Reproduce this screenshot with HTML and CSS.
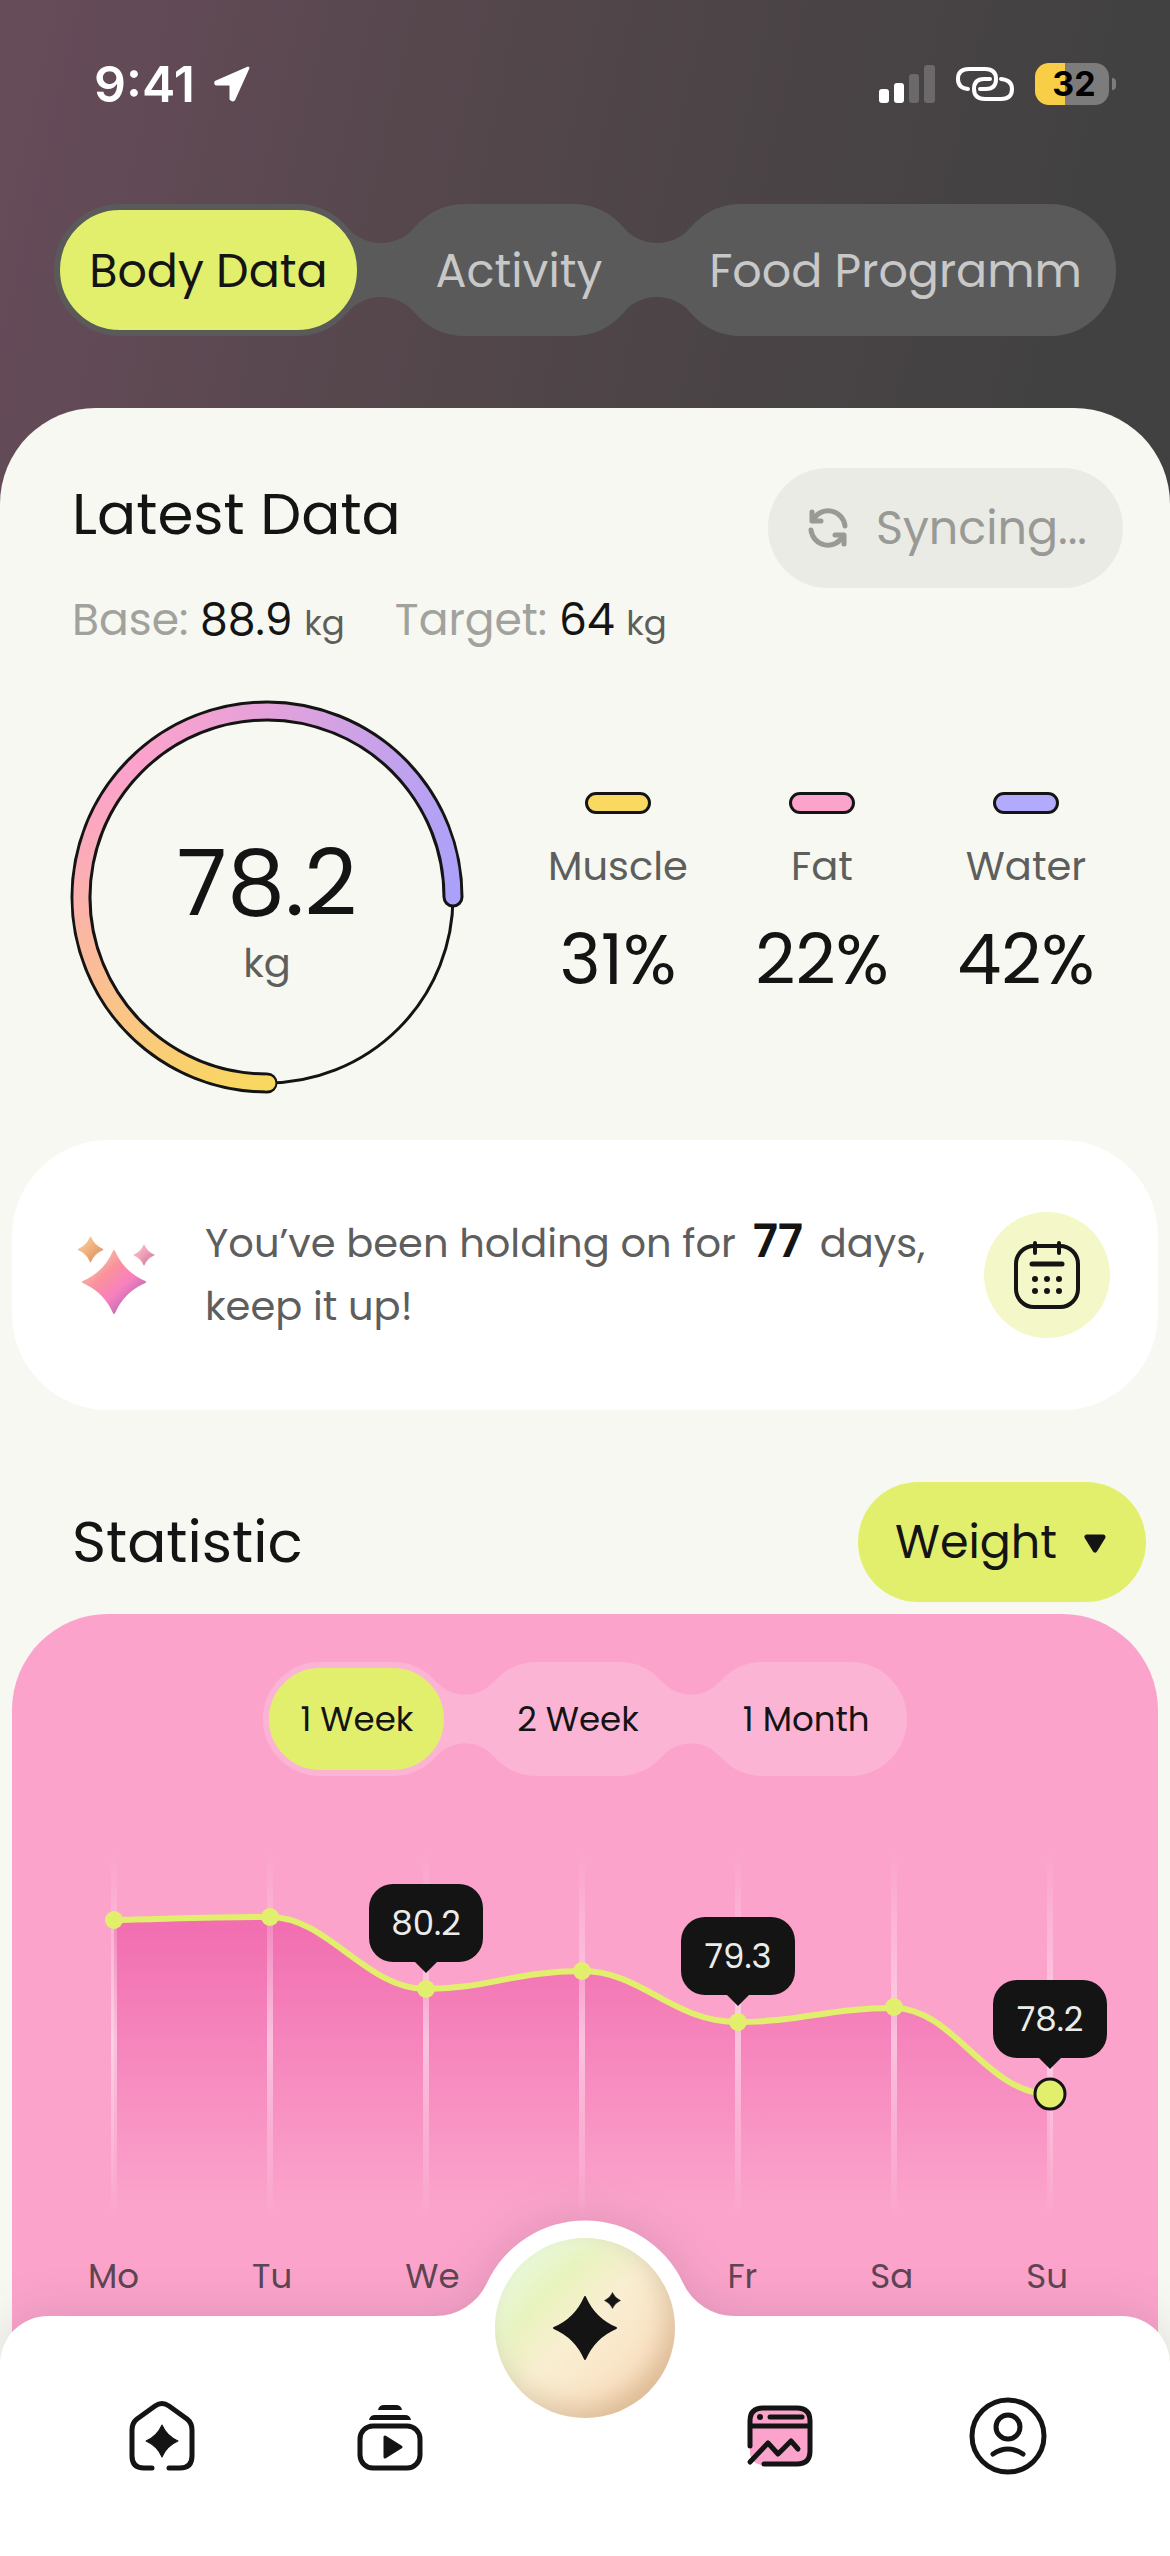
FILE: index.html
```html
<!DOCTYPE html>
<html lang="en">
<head>
  <meta charset="utf-8">
  <meta name="viewport" content="width=device-width, initial-scale=1">
  <title>Body Data</title>
  <link rel="stylesheet" href="styles.css">
</head>
<body>
  <svg class="defs" aria-hidden="true">
    <defs>
      <symbol id="star" viewBox="-32 -32 64 64">
        <path d="M0-30Q9-9 30 0Q9 9 0 30Q-9 9-30 0Q-9-9 0-30Z" stroke-width="2" stroke-linejoin="round"/>
      </symbol>
      <symbol id="neck-large" viewBox="-34 -66 68 132">
        <path d="M-34-43A44 44 0 0 0 34-43V43A44 44 0 0 0-34 43Z"/>
      </symbol>
      <symbol id="neck-small" viewBox="-28 -57 56 114">
        <path d="M-28-37A37 37 0 0 0 28-37V37A37 37 0 0 0-28 37Z"/>
      </symbol>
    </defs>
  </svg>

  <header class="top">
    <div class="status">
      <div class="status-group">
        <span class="status-time">9:41</span>
        <svg width="38" height="38" viewBox="0 0 38 38" aria-hidden="true"><path d="M35 3L3 17Q2 19 4 19H18V34Q20 36 21 34Z" fill="#fff" stroke="#fff" stroke-width="3" stroke-linejoin="round"/></svg>
      </div>
      <div class="status-group status-icons">
        <svg width="56" height="38" viewBox="0 0 56 38" aria-hidden="true">
          <g fill="#fff"><rect y="24" width="10" height="14" rx="3"/><rect x="15" y="18" width="10" height="20" rx="3"/></g>
          <g fill="#6b696a"><rect x="30" y="9" width="10" height="29" rx="3"/><rect x="45" width="11" height="38" rx="3"/></g>
        </svg>
        <svg width="60" height="38" viewBox="0 0 60 38" fill="none" stroke="#fff" stroke-width="4" stroke-linecap="round" aria-hidden="true">
          <path d="M13 24Q3 23 3 14Q3 4 14 4H30Q41 4 41 14Q41 24 31 24H25"/>
          <path d="M46 14Q57 15 57 24Q57 34 46 34H30Q19 34 19 24Q19 14 29 14H35"/>
        </svg>
        <div class="battery"><span class="battery-level">32</span></div>
      </div>
    </div>

    <nav class="segments segments-large" aria-label="Sections">
      <button class="segment is-active" style="--share:308">Body Data</button>
      <svg class="neck" aria-hidden="true"><use href="#neck-large"/></svg>
      <button class="segment" style="--share:237">Activity</button>
      <svg class="neck" aria-hidden="true"><use href="#neck-large"/></svg>
      <button class="segment" style="--share:445">Food Programm</button>
    </nav>
  </header>

  <main class="sheet">
    <section class="latest">
      <div>
        <h1 class="title">Latest Data</h1>
        <p class="facts">
          <span class="fact">Base: <b>88.9</b> <small>kg</small></span>
          <span class="fact">Target: <b>64</b> <small>kg</small></span>
        </p>
      </div>
      <button class="sync" disabled>
        <svg width="48" height="48" viewBox="0 0 48 48" fill="none" stroke="currentColor" stroke-width="5" stroke-linecap="round" stroke-linejoin="round" aria-hidden="true">
          <path d="M41 22A17 17 0 0 0 9 16"/><path d="M8 8V17H17"/>
          <path d="M7 26A17 17 0 0 0 39 32"/><path d="M40 40V31H31"/>
        </svg>
        Syncing...
      </button>
    </section>

    <section class="composition">
      <div class="ring">
        <svg viewBox="0 0 394 394" fill="none" aria-hidden="true">
          <defs>
            <linearGradient id="warm" gradientUnits="userSpaceOnUse" x1="197" y1="383" x2="60" y2="70"><stop stop-color="#f9d85f"/><stop offset="1" stop-color="#fca2cb"/></linearGradient>
            <linearGradient id="cool" gradientUnits="userSpaceOnUse" x1="65" y1="66" x2="383" y2="180"><stop stop-color="#fca2cb"/><stop offset="1" stop-color="#aca1fa"/></linearGradient>
          </defs>
          <circle cx="197" cy="197" r="186" stroke="#141414" stroke-width="3"/>
          <path d="M197 383A186 186 0 1 1 383 197" stroke="#141414" stroke-width="21" stroke-linecap="round"/>
          <path d="M383 197A186 186 0 0 0 65 66" stroke="url(#cool)" stroke-width="15" stroke-linecap="round"/>
          <path d="M197 383A186 186 0 0 1 65 66" stroke="url(#warm)" stroke-width="15"/>
          <path d="M197 383h1" stroke="#f9d85f" stroke-width="15" stroke-linecap="round"/>
        </svg>
        <p class="ring-value">78.2</p>
        <p class="ring-unit">kg</p>
      </div>
      <dl class="metrics">
        <div class="metric muscle"><dt>Muscle</dt><dd>31%</dd></div>
        <div class="metric fat"><dt>Fat</dt><dd>22%</dd></div>
        <div class="metric water"><dt>Water</dt><dd>42%</dd></div>
      </dl>
    </section>

    <section class="streak">
      <svg class="sparkles" width="78" height="78" viewBox="0 0 78 78" aria-hidden="true">
        <defs>
          <linearGradient id="pinkStar" x1="0.2" y1="0.2" x2="0.75" y2="0.8"><stop stop-color="#f7b5ac"/><stop offset=".3" stop-color="#fa919b"/><stop offset=".7" stop-color="#f880bf"/><stop offset="1" stop-color="#c870b5"/></linearGradient>
          <linearGradient id="goldStar" x1="0.2" y1="0.2" x2="0.8" y2="0.8"><stop stop-color="#f6c79a"/><stop offset=".5" stop-color="#f0ae79"/><stop offset="1" stop-color="#d99a6c"/></linearGradient>
          <linearGradient id="roseStar" x1="0.2" y1="0.2" x2="0.8" y2="0.8"><stop stop-color="#f5b8c6"/><stop offset=".5" stop-color="#ee9db5"/><stop offset="1" stop-color="#d382a4"/></linearGradient>
        </defs>
        <use href="#star" x="4" y="13" width="66" height="66" fill="url(#pinkStar)" stroke="url(#pinkStar)"/>
        <use href="#star" x="0" y="0" width="27" height="27" fill="url(#goldStar)" stroke="url(#goldStar)"/>
        <use href="#star" x="56" y="8" width="22" height="22" fill="url(#roseStar)" stroke="url(#roseStar)"/>
      </svg>
      <p class="streak-text">You’ve been holding on for <b>77</b> days,<br>keep it up!</p>
      <button class="calendar" aria-label="Calendar">
        <svg width="72" height="72" viewBox="0 0 72 72" fill="none" stroke="#141414" stroke-width="4" stroke-linecap="round" aria-hidden="true">
          <rect x="5" y="7" width="62" height="61" rx="18"/>
          <path d="M24 4v10M48 4v10"/><path d="M21 25h30" stroke-width="5"/>
          <g fill="#141414" stroke="none"><circle cx="24" cy="40" r="3"/><circle cx="36" cy="40" r="3"/><circle cx="48" cy="40" r="3"/><circle cx="24" cy="52" r="3"/><circle cx="36" cy="52" r="3"/><circle cx="48" cy="52" r="3"/></g>
        </svg>
      </button>
    </section>

    <section class="statistic">
      <div class="statistic-head">
        <h2 class="title">Statistic</h2>
        <div class="picker">
          <select class="picker-select" aria-label="Measure"><option>Weight</option></select>
          <svg class="picker-arrow" width="24" height="20" viewBox="0 0 24 20" aria-hidden="true"><path d="M4 3H20L12 16Z" fill="#141414" stroke="#141414" stroke-width="5" stroke-linejoin="round"/></svg>
        </div>
      </div>

      <div class="panel">
        <div class="segments segments-small">
          <button class="segment is-active">1 Week</button>
          <svg class="neck" aria-hidden="true"><use href="#neck-small"/></svg>
          <button class="segment">2 Week</button>
          <svg class="neck" aria-hidden="true"><use href="#neck-small"/></svg>
          <button class="segment">1 Month</button>
        </div>

        <div class="chart">
          <svg viewBox="0 0 1146 380" fill="none" role="img" aria-label="Weight by day">
            <defs>
              <linearGradient id="area" gradientUnits="userSpaceOnUse" x1="0" y1="70" x2="0" y2="356"><stop stop-color="#f16db0"/><stop offset="1" stop-color="#f16db0" stop-opacity="0"/></linearGradient>
              <linearGradient id="line" x1="0" y1="0" x2="0" y2="1"><stop stop-color="#fff" stop-opacity="0"/><stop offset=".52" stop-color="#fff" stop-opacity=".5"/><stop offset="1" stop-color="#fff" stop-opacity="0"/></linearGradient>
            </defs>
            <path d="M102 74C154 73 206 71 258 71C316 71 354 143 414 143C474 143 504 125 570 125C630 125 660 176 726 176C790 176 816 162 882 162C942 162 974 248 1038 248V374H102Z" fill="url(#area)"/>
            <g fill="url(#line)">
              <rect x="99" y="4" width="6" height="370"/><rect x="255" y="4" width="6" height="370"/><rect x="411" y="4" width="6" height="370"/><rect x="567" y="4" width="6" height="370"/><rect x="723" y="4" width="6" height="370"/><rect x="879" y="4" width="6" height="370"/><rect x="1035" y="4" width="6" height="370"/>
            </g>
            <path d="M102 74C154 73 206 71 258 71C316 71 354 143 414 143C474 143 504 125 570 125C630 125 660 176 726 176C790 176 816 162 882 162C942 162 974 248 1038 248" stroke="#e2ef6d" stroke-width="6"/>
            <g fill="#e2ef6d">
              <circle cx="102" cy="74" r="9"/><circle cx="258" cy="71" r="9"/><circle cx="414" cy="143" r="9"/><circle cx="570" cy="125" r="9"/><circle cx="726" cy="176" r="9"/><circle cx="882" cy="161" r="9"/>
              <circle cx="1038" cy="248" r="15" stroke="#141414" stroke-width="3"/>
            </g>
          </svg>
          <span class="tip" style="left:36.13%;top:37.63%">80.2</span>
          <span class="tip" style="left:63.35%;top:46.32%">79.3</span>
          <span class="tip tip-current" style="left:90.58%;top:65.26%">78.2</span>
        </div>
        <ul class="days">
          <li>Mo</li><li>Tu</li><li>We</li><li class="day-gap" aria-hidden="true"></li><li>Fr</li><li>Sa</li><li>Su</li>
        </ul>
      </div>
    </section>
  </main>

  <nav class="tabbar" aria-label="Main">
    <svg class="bump" width="300" height="97" viewBox="0 0 300 97" fill="#fff" aria-hidden="true"><path d="M0 96A57 57 0 0 0 52 63A108 108 0 0 1 248 63A57 57 0 0 0 300 96V97H0Z"/></svg>
    <a class="tab" href="#home" aria-label="Home">
      <svg width="84" height="84" viewBox="0 0 84 84" fill="none" stroke="#141414" stroke-width="5" stroke-linecap="round" stroke-linejoin="round" aria-hidden="true">
        <path d="M32 74H24Q12 74 12 62V36Q12 29 17 25L35 12Q42 7 49 12L67 25Q72 29 72 36V62Q72 74 60 74H49"/>
        <use href="#star" x="25" y="30" width="34" height="34" fill="#141414"/>
      </svg>
    </a>
    <a class="tab" href="#videos" aria-label="Videos">
      <svg width="84" height="84" viewBox="0 0 84 84" fill="none" stroke="#141414" stroke-width="5" stroke-linejoin="round" aria-hidden="true">
        <rect x="12" y="32" width="60" height="42" rx="13"/>
        <path d="M37 43V63L53 53Z" fill="#141414" stroke-width="3"/>
        <g fill="#141414" stroke="none"><path d="M30 16Q31 11 36 11H48Q53 11 54 16Z"/><path d="M21 26Q22 21 27 21H57Q62 21 63 26Z"/></g>
      </svg>
    </a>
    <a class="assistant" href="#assistant" aria-label="Assistant">
      <svg width="90" height="90" viewBox="0 0 90 90" fill="#141414" stroke="#141414" aria-hidden="true">
        <use href="#star" x="12" y="12" width="66" height="66"/>
        <use href="#star" x="64" y="9" width="17" height="17"/>
      </svg>
    </a>
    <a class="tab" href="#stats" aria-label="Statistics" aria-current="page">
      <svg width="84" height="84" viewBox="0 0 84 84" fill="none" stroke="#141414" stroke-width="5" stroke-linecap="round" stroke-linejoin="round" aria-hidden="true">
        <rect x="12" y="13" width="60" height="58" rx="13" fill="#fba3cb" stroke="none"/>
        <path d="M12 52V27Q12 14 25 14H59Q72 14 72 27V57Q72 70 59 70H26M12 32H72"/>
        <path d="M12 68L30 49L40 60L53 47L60 55"/><path d="M32 23H64"/><circle cx="22" cy="23" r="3" fill="#141414" stroke="none"/>
      </svg>
    </a>
    <a class="tab" href="#profile" aria-label="Profile">
      <svg width="84" height="84" viewBox="0 0 84 84" fill="none" stroke="#141414" stroke-width="5" stroke-linecap="round" aria-hidden="true">
        <circle cx="42" cy="42" r="36"/><circle cx="42" cy="33" r="12"/><path d="M27 60Q42 50 57 60"/>
      </svg>
    </a>
  </nav>
</body>
</html>
```
FILE: styles.css
```css
*, *::before, *::after { box-sizing: border-box; }

body {
  margin: 0;
  min-height: 100vh;
  display: flex;
  flex-direction: column;
  background: #fff;
  color: #141414;
  font-family: "Poppins", "Roboto", "Liberation Sans", sans-serif;
}

h1, h2, p, dl, dd, ul { margin: 0; padding: 0; }
button, select { border: 0; padding: 0; font: inherit; color: inherit; background: none; }
svg { display: block; flex: none; }
.defs { position: absolute; width: 0; height: 0; }

/* Header */
.top {
  padding: 54px 54px 168px;
  margin-bottom: -96px;
  background: linear-gradient(103deg, #664b59 4%, #52464a 42%, #424142 88%);
}

.status {
  display: flex;
  justify-content: space-between;
  align-items: center;
  height: 60px;
  padding-left: 40px;
  margin-bottom: 90px;
}
.status-group { display: flex; align-items: center; gap: 18px; }
.status-icons { gap: 20px; }
.status-time { font: 600 50px/60px "Inter", sans-serif; color: #fff; }

.battery { display: flex; align-items: center; gap: 3px; }
.battery::after { content: ""; width: 4px; height: 12px; border-radius: 0 6px 6px 0; background: #7c7c7c; }
.battery-level {
  width: 74px;
  height: 42px;
  padding-left: 4px;
  border-radius: 14px;
  background: linear-gradient(90deg, #f8ce46 30px, #7c7c7c 30px);
  color: #000;
  font: 700 34px/42px "Inter", sans-serif;
  text-align: center;
}

/* Segmented controls joined by narrow necks */
.segments { display: flex; align-items: center; }
.segment {
  position: relative;
  z-index: 1;
  border: 6px solid var(--track);
  background: var(--track);
  white-space: nowrap;
}
.segment.is-active { background: #e2ef6d; color: #141414; }
.neck { fill: var(--track); }

.segments-large { --track: #5a5a5a; color: #c8c8c8; }
.segments-large .segment { flex: var(--share) 1 0; height: 132px; padding-top: 2px; border-radius: 66px; font-size: 46px; }
.segments-large .neck { width: 68px; height: 132px; margin: 0 -16px; }

.segments-small { --track: #fcb4d5; justify-content: center; }
.segments-small .segment { height: 114px; padding: 0 31px; border-radius: 57px; font-size: 34px; }
.segments-small .neck { width: 56px; height: 114px; margin: 0 -13px; }

/* Sheet */
.sheet { flex: 1; border-radius: 96px 96px 0 0; background: #f7f8f1; }
.title { font-size: 58px; line-height: 72px; font-weight: 400; }

.latest {
  display: flex;
  justify-content: space-between;
  align-items: flex-start;
  padding: 60px 47px 0 72px;
}
.latest .title { margin-top: 10px; }
.facts { display: flex; gap: 50px; margin-top: 40px; font-size: 44px; line-height: 60px; color: #a1a29d; }
.fact { height: 60px; }
.facts b { font-weight: 400; color: #141414; }
.facts small { font-size: 34px; line-height: 1; color: #5e5f5c; }

.sync {
  display: flex;
  align-items: center;
  gap: 24px;
  height: 120px;
  padding: 0 36px;
  border-radius: 60px;
  background: #eaebe5;
  color: #999a95;
  font-size: 46px;
}

.composition { display: flex; align-items: center; gap: 52px; padding: 50px 42px 46px 70px; }
.ring {
  display: grid;
  width: 394px;
  height: 394px;
  grid-template-rows: 127px 112px 155px;
  text-align: center;
}
.ring svg { grid-area: 1 / 1 / 4 / 2; width: 394px; height: 394px; }
.ring-value { grid-area: 2 / 1; font-size: 92px; line-height: 112px; }
.ring-unit { grid-area: 3 / 1; font-size: 40px; line-height: 48px; color: #5e5f5c; }

.metrics { flex: 1; display: grid; grid-template-columns: repeat(3, 1fr); }
.metric { display: flex; flex-direction: column; align-items: center; gap: 28px; }
.metric::before { content: ""; width: 66px; height: 22px; border: 3px solid #141414; border-radius: 11px; background: var(--swatch); }
.metric dt { font-size: 40px; line-height: 48px; color: #5e5f5c; }
.metric dd { font-size: 70px; line-height: 84px; }
.muscle { --swatch: #fad960; }
.fat { --swatch: #fba3cb; }
.water { --swatch: #b2abfd; }

/* Streak card */
.streak {
  display: flex;
  align-items: center;
  min-height: 270px;
  margin: 0 12px;
  padding: 0 48px 0 65px;
  border-radius: 96px;
  background: #fff;
}
.streak-text { flex: 1; margin-left: 50px; font-size: 40px; line-height: 63px; color: #5e5e5e; }
.streak-text b { margin: 0 6px; font-size: 46px; line-height: 1; font-weight: 600; color: #141414; }
.calendar { display: grid; place-items: center; width: 126px; height: 126px; border-radius: 50%; background: #f4f8c8; }

/* Statistic */
.statistic { padding: 72px 12px 0; }
.statistic-head { display: flex; justify-content: space-between; align-items: center; padding: 0 12px 12px 60px; }
.picker { position: relative; }
.picker-select {
  display: block;
  appearance: none;
  width: 288px;
  height: 120px;
  padding-left: 37px;
  border-radius: 60px;
  background: #e2ef6d;
  font-size: 46px;
}
.picker-arrow { position: absolute; top: 52px; right: 39px; pointer-events: none; }

.panel { padding: 48px 0 66px; border-radius: 96px 96px 0 0; background: #fba3cb; }
.chart { position: relative; margin-top: 70px; }
.chart svg { width: 100%; height: auto; }
.tip {
  position: absolute;
  width: 114px;
  border-radius: 24px;
  background: #141414;
  color: #ebedea;
  font-size: 34px;
  line-height: 78px;
  text-align: center;
  transform: translate(-50%, calc(-100% - 27px));
}
.tip::after {
  content: "";
  position: absolute;
  top: 100%;
  left: 46px;
  border: 11px solid transparent;
  border-top-color: #141414;
  border-bottom-width: 0;
}
.tip-current { transform: translate(-50%, calc(-100% - 36px)); }

.days {
  display: flex;
  justify-content: space-between;
  padding: 26px 90px 0 76px;
  list-style: none;
  font-size: 34px;
  line-height: 48px;
  color: #5d4552;
}
.day-gap { width: 42px; }

/* Tab bar */
.tabbar {
  position: sticky;
  bottom: 0;
  z-index: 2;
  display: grid;
  grid-template-columns: repeat(2, 1fr) 162px repeat(2, 1fr);
  justify-items: center;
  height: 240px;
  margin-top: -50px;
  padding: 78px 48px 0;
  border-radius: 48px 48px 0 0;
  background: #fff;
  filter: drop-shadow(0 0 24px rgba(60, 60, 60, 0.16));
}
.bump { position: absolute; left: 50%; bottom: 100%; margin: 0 0 -1px -150px; }
.tab { height: 84px; }
.assistant {
  display: grid;
  place-items: center;
  width: 180px;
  height: 180px;
  margin-top: -156px;
  z-index: 1;
  border-radius: 50%;
  background: linear-gradient(135deg, #e6f9d4 10%, #e9f3be 30%, #faeed2 50%, #fae3c5 72%, #f3d3ae 95%);
  box-shadow: inset -8px -10px 24px rgba(176, 122, 80, 0.35), inset 8px 8px 20px rgba(240, 255, 235, 0.5);
}
```
